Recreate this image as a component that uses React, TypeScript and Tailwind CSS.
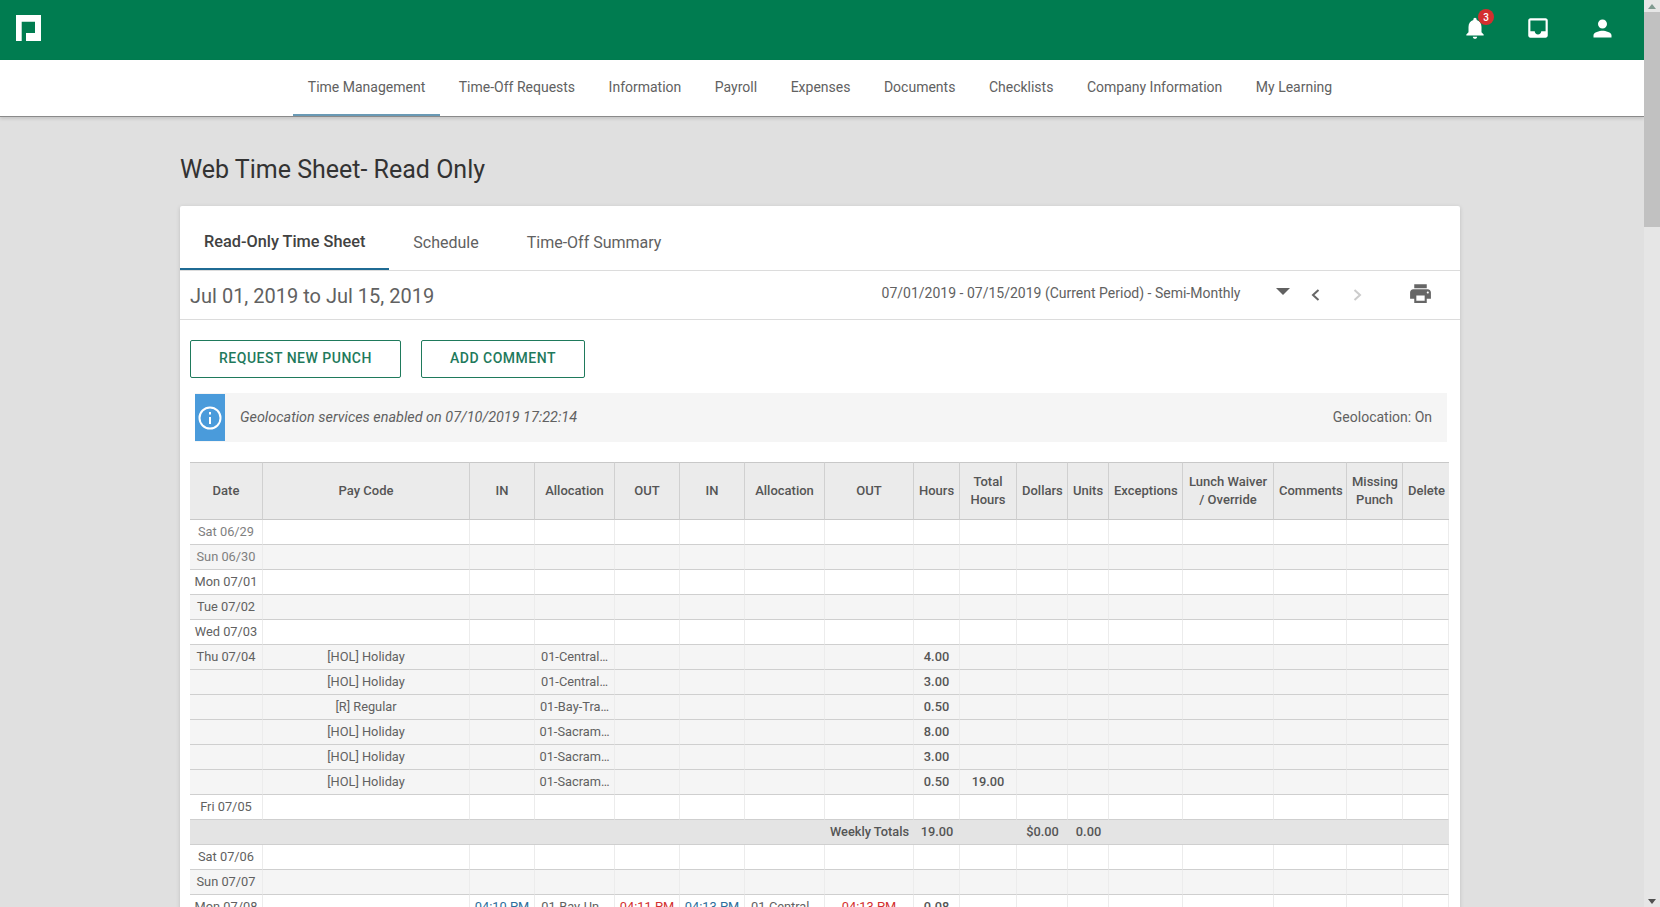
import React from "react";

const colWidths = [73, 207, 65, 80, 65, 65, 80, 89, 46, 57, 51, 41, 74, 91, 73, 56, 46];

const headers = [
  "Date", "Pay Code", "IN", "Allocation", "OUT", "IN", "Allocation", "OUT", "Hours",
  "Total Hours", "Dollars", "Units", "Exceptions", "Lunch Waiver / Override", "Comments", "Missing Punch", "Delete",
];

const navItems = [
  "Time Management", "Time-Off Requests", "Information", "Payroll", "Expenses",
  "Documents", "Checklists", "Company Information", "My Learning",
];

interface Row {
  date?: string;
  pay?: string;
  alloc?: string;
  hours?: string;
  total?: string;
  shaded?: boolean;
  dim?: boolean;
  times?: string[]; // in, alloc, out, in, alloc, out
}

const rows: (Row | "totals")[] = [
  { date: "Sat 06/29", dim: true },
  { date: "Sun 06/30", shaded: true, dim: true },
  { date: "Mon 07/01" },
  { date: "Tue 07/02", shaded: true },
  { date: "Wed 07/03" },
  { date: "Thu 07/04", pay: "[HOL] Holiday", alloc: "01-Central…", hours: "4.00", shaded: true },
  { pay: "[HOL] Holiday", alloc: "01-Central…", hours: "3.00", shaded: true },
  { pay: "[R] Regular", alloc: "01-Bay-Tra…", hours: "0.50", shaded: true },
  { pay: "[HOL] Holiday", alloc: "01-Sacram…", hours: "8.00", shaded: true },
  { pay: "[HOL] Holiday", alloc: "01-Sacram…", hours: "3.00", shaded: true },
  { pay: "[HOL] Holiday", alloc: "01-Sacram…", hours: "0.50", total: "19.00", shaded: true },
  { date: "Fri 07/05" },
  "totals",
  { date: "Sat 07/06" },
  { date: "Sun 07/07", shaded: true },
  {
    date: "Mon 07/08",
    hours: "0.08",
    times: ["04:10 PM", "01-Bay-Un…", "04:11 PM", "04:13 PM", "01-Central…", "04:13 PM"],
  },
];

const cellBase = "h-[25px] p-0 pb-[1px] text-center text-[12.8px] whitespace-nowrap border-b border-b-[#cfcfcf]";
const cellLine = "border-r border-r-[#ececec]";

function DataRow({ row }: { row: Row }) {
  const t = row.times;
  const blank = (n: number) =>
    Array.from({ length: n }, (_, i) => <td key={i} className={`${cellBase} ${cellLine}`} />);

  return (
    <tr className={row.shaded ? "bg-[#f5f5f5]" : "bg-white"}>
      <td className={`${cellBase} ${cellLine} ${row.dim ? "text-[#808080]" : "text-[#616161]"}`}>{row.date}</td>
      <td className={`${cellBase} ${cellLine} text-[#616161]`}>{row.pay}</td>
      <td className={`${cellBase} ${cellLine} text-[#2d6f9c]`}>{t?.[0]}</td>
      <td className={`${cellBase} ${cellLine} text-[#616161]`}>{t ? t[1] : row.alloc}</td>
      <td className={`${cellBase} ${cellLine} text-[#d32f2f]`}>{t?.[2]}</td>
      <td className={`${cellBase} ${cellLine} text-[#2d6f9c]`}>{t?.[3]}</td>
      <td className={`${cellBase} ${cellLine} text-[#616161]`}>{t?.[4]}</td>
      <td className={`${cellBase} ${cellLine} text-[#d32f2f]`}>{t?.[5]}</td>
      <td className={`${cellBase} ${cellLine} font-medium text-[#555]`}>{row.hours}</td>
      <td className={`${cellBase} ${cellLine} font-medium text-[#555]`}>{row.total}</td>
      {blank(7)}
    </tr>
  );
}

function TotalsRow() {
  const cls = `${cellBase} font-medium text-[#555]`;
  return (
    <tr className="bg-[#e4e4e4]">
      <td colSpan={7} className={cls} />
      <td className={cls}>Weekly Totals</td>
      <td className={cls}>19.00</td>
      <td className={cls} />
      <td className={cls}>$0.00</td>
      <td className={cls}>0.00</td>
      <td colSpan={5} className={cls} />
    </tr>
  );
}

function Scrollbar() {
  return (
    <div className="flex h-full w-[16px] shrink-0 flex-col items-center bg-[#e6e6e6]">
      <div className="flex h-[12px] w-full items-center justify-center">
        <div className="h-0 w-0 border-x-[4px] border-b-[5px] border-x-transparent border-b-[#7f9a90]" />
      </div>
      <div className="h-[215px] w-full bg-[#c1c1c1]" />
      <div className="mt-auto flex h-[12px] w-full items-center justify-center">
        <div className="h-0 w-0 border-x-[4px] border-t-[5px] border-x-transparent border-t-[#505050]" />
      </div>
    </div>
  );
}

export default function App() {
  return (
    <div className="flex h-screen overflow-hidden bg-[#e0e0e0] font-['Roboto',sans-serif]">
      <div className="h-full w-[1644px] shrink-0 overflow-hidden">
        {/* top bar */}
        <header className="flex h-[60px] items-center justify-between bg-[#007c50]">
          <svg className="ml-[16px] mt-[-4px] h-[26px] w-[25px]" viewBox="0 0 25 26">
            <path fill="#fff" fillRule="evenodd" d="M0 0h25v26H0zM5.7 6.7V26H10V18h9V6.7z" />
          </svg>
          <div className="mb-[4px] mr-[10px] flex items-center">
            <div className="relative flex h-[56px] w-[64px] items-center justify-center">
              <svg className="ml-[2px] h-[26px] w-[26px]" viewBox="0 0 24 24" fill="#fff">
                <path d="M12 22c1.1 0 2-.9 2-2h-4c0 1.1.89 2 2 2zm6-6v-5c0-3.07-1.64-5.64-4.5-6.32V4c0-.83-.67-1.5-1.5-1.5s-1.5.67-1.5 1.5v.68C7.63 5.36 6 7.92 6 11v5l-2 2v1h16v-1l-2-2z" />
              </svg>
              <span className="absolute left-[36px] top-[9px] flex h-[16px] w-[16px] items-center justify-center rounded-full bg-[#d32f2f] text-[10px] font-medium text-white">
                3
              </span>
            </div>
            <div className="flex h-[56px] w-[64px] items-center justify-center">
              <svg className="h-[26px] w-[26px]" viewBox="0 0 24 24" fill="#fff">
                <path d="M19 3H4.99c-1.11 0-1.98.89-1.98 2L3 19c0 1.1.88 2 1.99 2H19c1.1 0 2-.9 2-2V5c0-1.11-.9-2-2-2zm0 12h-4c0 1.66-1.35 3-3 3s-3-1.34-3-3H4.99V5H19v10z" />
              </svg>
            </div>
            <div className="flex h-[56px] w-[64px] items-center justify-center">
              <svg className="h-[27px] w-[27px]" viewBox="0 0 24 24" fill="#fff">
                <path d="M12 12c2.21 0 4-1.79 4-4s-1.79-4-4-4-4 1.79-4 4 1.79 4 4 4zm0 2c-2.67 0-8 1.34-8 4v2h16v-2c0-2.66-5.33-4-8-4z" />
              </svg>
            </div>
          </div>
        </header>

        {/* main nav */}
        <nav className="flex h-[57px] justify-center gap-[3.5px] border-b border-b-[#8a8a8a] bg-white pr-[4px] shadow-[0_2px_3px_rgba(0,0,0,0.12)]">
          {navItems.map((item, i) => (
            <a
              key={item}
              className={`flex items-center border-b-[2px] px-[15px] text-[14px] text-[#616161] ${
                i === 0 ? "border-b-[#6a9ab5]" : "border-b-transparent"
              }`}
            >
              {item}
            </a>
          ))}
        </nav>

        <div className="flex h-[89px] items-center pl-[180px] pt-[16px]">
          <h1 className="text-[25px] text-[#333]">Web Time Sheet- Read Only</h1>
        </div>

        {/* card */}
        <div className="ml-[180px] w-[1280px] rounded-t-[2px] bg-white shadow-[0_1px_4px_rgba(0,0,0,0.15)]">
          <div className="flex h-[65px] border-b border-b-[#dcdcdc]">
            <div className="flex items-center border-b-[2px] border-b-[#1f6b94] px-[24px] pt-[11px] text-[16.3px] font-medium text-[#424242]">
              Read-Only Time Sheet
            </div>
            <div className="flex items-center border-b-[2px] border-b-transparent px-[24px] pt-[11px] text-[16px] text-[#616161]">
              Schedule
            </div>
            <div className="flex items-center border-b-[2px] border-b-transparent px-[24px] pt-[11px] text-[16px] text-[#616161]">
              Time-Off Summary
            </div>
          </div>

          <div className="flex h-[49px] items-center border-b border-b-[#dcdcdc]">
            <span className="ml-[10px] pt-[2px] text-[20px] text-[#616161]">Jul 01, 2019 to Jul 15, 2019</span>
            <span className="mb-[3px] ml-auto text-[14px] text-[#616161]">
              07/01/2019 - 07/15/2019 (Current Period) - Semi-Monthly
            </span>
            <div className="ml-[35px] mt-[-8px] h-0 w-0 border-x-[7.5px] border-t-[7px] border-x-transparent border-t-[#616161]" />
            <svg className="ml-[21px] h-[12px] w-[9px]" viewBox="0 0 9 12" fill="none" stroke="#666" strokeWidth="2">
              <path d="M7.5 1 2 6l5.500 5" />
            </svg>
            <svg className="ml-[33px] h-[12px] w-[9px]" viewBox="0 0 9 12" fill="none" stroke="#ccc" strokeWidth="2">
              <path d="M1.500 1 7 6l-5.500 5" />
            </svg>
            <svg className="ml-[46px] mr-[27.5px] mt-[-4px] h-[25px] w-[25px]" viewBox="0 0 24 24" fill="#666">
              <path d="M19 8H5c-1.660 0-3 1.340-3 3v6h4v4h12v-4h4v-6c0-1.660-1.340-3-3-3zm-3 11H8v-5h8v5zm3-7c-.55 0-1-.45-1-1s.45-1 1-1 1 .45 1 1-.45 1-1 1zm-1-9H6v4h12V3z" />
            </svg>
          </div>

          <div className="ml-[10px] mt-[20px] flex gap-[20px]">
            <button className="h-[38px] w-[211px] rounded-[2px] border border-[#1f7a5c] pb-[1px] text-[14px] font-medium tracking-[0.5px] text-[#1f7a5c]">
              REQUEST NEW PUNCH
            </button>
            <button className="h-[38px] w-[164px] rounded-[2px] border border-[#1f7a5c] pb-[1px] text-[14px] font-medium tracking-[0.5px] text-[#1f7a5c]">
              ADD COMMENT
            </button>
          </div>

          <div className="ml-[15px] mt-[15px] flex h-[49px] w-[1252px] items-center bg-[#f5f5f5] py-[1px]">
            <div className="flex h-full w-[30px] items-center justify-center bg-[#4a9bdb]">
              <svg className="h-[24px] w-[24px]" viewBox="0 0 24 24" fill="none" stroke="#fff" strokeWidth="2">
                <circle cx="12" cy="12" r="10.500" />
                <path d="M12 11v7M12 6v2.500" />
              </svg>
            </div>
            <em className="ml-[15px] text-[14.4px] text-[#616161]">Geolocation services enabled on 07/10/2019 17:22:14</em>
            <span className="ml-auto mr-[15px] text-[14px] text-[#616161]">Geolocation: On</span>
          </div>

          <table className="ml-[10px] mt-[20px] w-[1259px] table-fixed border-separate border-spacing-0">
            <colgroup>
              {colWidths.map((w, i) => (
                <col key={i} style={{ width: w }} />
              ))}
            </colgroup>
            <thead>
              <tr className="bg-[#ebebeb]">
                {headers.map((h) => (
                  <th
                    key={h}
                    className="h-[58px] border-y border-r border-y-[#c8c8c8] border-r-[#d0d0d0] px-[5px] py-0 text-center text-[13px] font-medium leading-[18px] text-[#555] last:border-r-0"
                  >
                    {h}
                  </th>
                ))}
              </tr>
            </thead>
            <tbody>
              {rows.map((row, i) => (row === "totals" ? <TotalsRow key={i} /> : <DataRow key={i} row={row} />))}
            </tbody>
          </table>
        </div>
      </div>
      <Scrollbar />
    </div>
  );
}
